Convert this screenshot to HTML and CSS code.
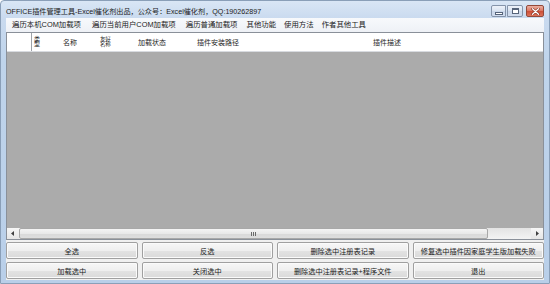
FILE: index.html
```html
<!DOCTYPE html>
<html lang="zh-CN">
<head>
<meta charset="utf-8">
<title>OFFICE插件管理工具</title>
<link rel="stylesheet" href="styles.css">
</head>
<body>
<div class="window">
  <div class="titlebar">
    <span class="title">OFFICE插件管理工具-Excel催化剂出品，公众号：Excel催化剂，QQ:190262897</span>
    <div class="caption">
      <div class="cbtn min"><span class="min-glyph"></span></div>
      <div class="cbtn max"><span class="max-glyph"></span></div>
      <div class="cbtn close">
        <svg width="9" height="7" viewBox="0 0 9 7"><path d="M1.5 0.8 L7.5 6.2 M7.5 0.8 L1.5 6.2" stroke="#7a2a1c" stroke-width="2.4" stroke-linecap="round"/><path d="M1.5 0.8 L7.5 6.2 M7.5 0.8 L1.5 6.2" stroke="#ffffff" stroke-width="1.3" stroke-linecap="round"/></svg>
      </div>
    </div>
  </div>
  <div class="client">
    <div class="menubar">
      <span class="menu m1">遍历本机COM加载项</span>
      <span class="menu m2">遍历当前用户COM加载项</span>
      <span class="menu m3">遍历普通加载项</span>
      <span class="menu m4">其他功能</span>
      <span class="menu m5">使用方法</span>
      <span class="menu m6">作者其他工具</span>
    </div>
    <div class="listview">
      <div class="header">
        <div class="hc c0"></div>
        <div class="hc c1"><span class="wrap narrow">类型</span></div>
        <div class="hc c2">名称</div>
        <div class="hc c3"><span class="wrap">友好名称</span></div>
        <div class="hc c4">加载状态</div>
        <div class="hc c5">插件安装路径</div>
        <div class="hc c6">插件描述</div>
        <div class="hc c7"></div>
      </div>
      <div class="lvbody"></div>
      <div class="hscroll">
        <div class="sarrow">
          <svg width="4" height="5" viewBox="0 0 4 5"><path d="M3 0 L0 2.5 L3 5 Z" fill="#404040"/></svg>
        </div>
        <div class="thumb"><span class="grip"></span></div>
        <div class="track"></div>
        <div class="sarrow">
          <svg width="4" height="5" viewBox="0 0 4 5"><path d="M1 0 L4 2.5 L1 5 Z" fill="#404040"/></svg>
        </div>
      </div>
    </div>
    <div class="buttons">
      <div class="btn">全选</div>
      <div class="btn">反选</div>
      <div class="btn">删除选中注册表记录</div>
      <div class="btn">修复选中插件因家庭学生版加载失败</div>
      <div class="btn">加载选中</div>
      <div class="btn">关闭选中</div>
      <div class="btn">删除选中注册表记录+程序文件</div>
      <div class="btn">退出</div>
    </div>
  </div>
</div>
</body>
</html>
```

FILE: styles.css
```css
html, body {
  margin: 0;
  padding: 0;
  background: #ffffff;
}

body {
  font-family: "Liberation Sans", "Noto Sans CJK SC", sans-serif;
  color: #1a1a1a;
}

.window {
  width: 550px;
  height: 284px;
  display: flex;
  flex-direction: column;
  background: linear-gradient(#d9e6f5 0px, #c9daef 18px, #bfd4eb 60px, #b9cfe9 100%);
  box-sizing: border-box;
  border: 1px solid #8a9fb8;
  border-radius: 4px 4px 0 0;
}

.titlebar {
  height: 17px;
  display: flex;
  align-items: center;
  padding-left: 5px;
  font-size: 7.15px;
  color: #1b1b1b;
}

.title {
  padding-top: 2px;
}

.caption {
  margin-left: auto;
  margin-right: 5px;
  margin-top: 3px;
  display: flex;
  gap: 1px;
}

.cbtn {
  height: 10px;
  border: 1px solid #8594aa;
  border-radius: 2px;
  display: flex;
  align-items: center;
  justify-content: center;
  box-sizing: content-box;
}

.min, .max {
  width: 13px;
  background: linear-gradient(#edf2f9, #d9e3f1 50%, #cbd8eb 51%, #d2ddee);
}

.min {
  border-radius: 2px 0 0 2px;
}

.max {
  width: 14px;
  margin-right: 2px;
  border-radius: 0 2px 2px 0;
}

.close {
  width: 16px;
  border-color: #93493a;
  background: linear-gradient(#eab0a2, #dc7560 50%, #cc4d36 51%, #dc735b);
}

.min-glyph {
  width: 6px;
  height: 1px;
  border: 1px solid #56647a;
  background: #ffffff;
  margin-top: 4px;
}

.max-glyph {
  width: 5px;
  height: 3px;
  border: 1px solid #56647a;
  border-top-width: 2px;
  background: #ffffff;
}

.client {
  flex: 1;
  margin: 0 5px 3px 5px;
  background: #f0f0f0;
  display: flex;
  flex-direction: column;
  min-height: 0;
}

.menubar {
  height: 14px;
  display: flex;
  align-items: center;
  background: linear-gradient(#f7f9fc, #eef1f6);
  font-size: 7.4px;
  padding-left: 2px;
}

.menu {
  padding: 0 5px 0 4px;
  line-height: 14px;
  white-space: nowrap;
}

.m2 { padding-left: 6px; }
.m3 { padding-left: 5px; }
.m4 { padding-left: 4px; }
.m5 { padding-left: 3px; }
.m6 { padding-left: 3px; }

.listview {
  height: 208px;
  box-sizing: border-box;
  border: 1px solid #8a9099;
  display: flex;
  flex-direction: column;
  background: #ababab;
}

.header {
  height: 18px;
  display: flex;
  background: #ffffff;
  border-bottom: 1px solid #d8dbe0;
  font-size: 7px;
  color: #262626;
}

.hc {
  display: flex;
  align-items: center;
  box-sizing: border-box;
  white-space: nowrap;
  overflow: hidden;
}

.c0 { width: 25px; border-right: 1px solid #9ea2a8; }
.c1 { width: 24px; padding-left: 2px; }
.c2 { width: 38px; padding-left: 7px; }
.c3 { width: 38px; padding-left: 6px; }
.c4 { width: 54px; padding-left: 6px; }
.c5 { width: 118px; padding-left: 11px; }
.c6 { width: 166px; justify-content: center; }
.c7 { flex: 1; }

.wrap {
  white-space: normal;
  width: 11px;
  font-size: 5.5px;
  line-height: 5.5px;
  word-break: break-all;
  letter-spacing: -0.3px;
}

.narrow {
  width: 6px;
  font-size: 6px;
  line-height: 5.5px;
}

.lvbody {
  flex: 1;
  background: #ababab;
}

.hscroll {
  height: 11px;
  display: flex;
  background: #efefef;
}

.sarrow {
  width: 12px;
  display: flex;
  align-items: center;
  justify-content: center;
  background: linear-gradient(#f6f6f6, #e6e6e6);
}

.thumb {
  width: 469px;
  box-sizing: border-box;
  border: 1px solid #a8a8a8;
  border-radius: 2px;
  background: linear-gradient(#f4f4f4, #e9e9e9 50%, #d9d9d9 51%, #dedede);
  display: flex;
  align-items: center;
  justify-content: center;
}

.grip {
  width: 5px;
  height: 4px;
  background: repeating-linear-gradient(90deg, #6a6a6a 0 1px, transparent 1px 2px);
}

.track {
  flex: 1;
  background: linear-gradient(#e3e3e3, #f3f3f3);
}

.buttons {
  display: grid;
  grid-template-columns: repeat(4, 1fr);
  grid-template-rows: 17px 17px;
  column-gap: 4px;
  row-gap: 3px;
  padding: 2px 0 0 0;
}

.btn {
  box-sizing: border-box;
  border: 1px solid #a0a0a0;
  border-radius: 2px;
  background: linear-gradient(#f7f7f7, #efefef 50%, #e3e3e3 51%, #dadada);
  display: flex;
  align-items: center;
  justify-content: center;
  font-size: 7.2px;
  color: #1a1a1a;
  white-space: nowrap;
  box-shadow: inset 0 0 0 1px #fbfbfb;
}
```
